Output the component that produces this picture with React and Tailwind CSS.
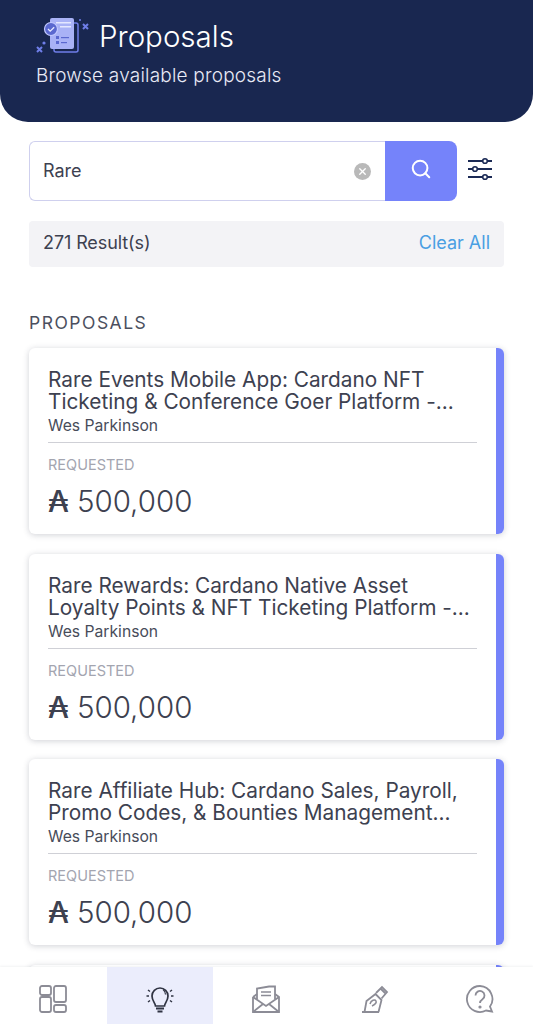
import { Search, X } from "lucide-react";

const proposals = [
  { id: 1, title: "Rare Events Mobile App: Cardano NFT Ticketing & Conference Goer Platform -..." },
  { id: 2, title: "Rare Rewards: Cardano Native Asset Loyalty Points & NFT Ticketing Platform -..." },
  { id: 3, title: "Rare Affiliate Hub: Cardano Sales, Payroll, Promo Codes, & Bounties Management..." },
];

const HeaderIcon = () => (
  <svg width="54" height="40" viewBox="0 0 54 40" fill="none">
    <rect x="18" y="7" width="24" height="29" rx="2" stroke="#6f7ee8" strokeWidth="1.5" />
    <rect x="14" y="2" width="24" height="31" rx="2" fill="#a9b2f6" />
    <rect x="20" y="6" width="15" height="1.5" fill="#e4e7ff" />
    <rect x="24" y="10" width="11" height="1.5" fill="#e4e7ff" />
    <circle cx="15" cy="13" r="6.5" fill="#5a68cf" stroke="#c3caff" strokeWidth="1.2" />
    <path d="M12 13l2.2 2.2 4-4" stroke="#e8eaff" strokeWidth="1.3" />
    <rect x="20" y="20" width="3" height="3" fill="#5a68cf" />
    <rect x="25" y="21" width="8" height="1.2" fill="#5a68cf" />
    <rect x="20" y="25" width="3" height="3" fill="#5a68cf" />
    <rect x="25" y="26" width="6" height="1.2" fill="#5a68cf" />
    <path d="M47 8l5 5m0-5l-5 5M1 31l5 5m0-5l-5 5" stroke="#6f7ee8" strokeWidth="2" />
    <circle cx="44" cy="4" r="1" fill="#6f7ee8" />
    <circle cx="8" cy="27" r="1.6" fill="#6f7ee8" />
  </svg>
);

const FilterIcon = () => (
  <svg width="26" height="24" viewBox="0 0 26 24" fill="none" stroke="#1b2a55" strokeWidth="2.2">
    <path d="M1 4h24M1 12h24M1 20h24" />
    <circle cx="18" cy="4" r="2.3" fill="#fff" strokeWidth="1.6" />
    <circle cx="8" cy="12" r="2.3" fill="#fff" strokeWidth="1.6" />
    <circle cx="18" cy="20" r="2.3" fill="#fff" strokeWidth="1.6" />
  </svg>
);

const GridIcon = () => (
  <svg width="28" height="28" viewBox="0 0 28 28" fill="none" stroke="#8c8c96" strokeWidth="1.8">
    <rect x="1" y="1" width="11" height="9" rx="2" />
    <rect x="1" y="12" width="11" height="15" rx="2" />
    <rect x="15" y="1" width="12" height="16" rx="2" />
    <rect x="15" y="20" width="12" height="7" rx="2" />
  </svg>
);

const BulbIcon = () => (
  <svg width="30" height="30" viewBox="0 0 30 30" fill="none" stroke="#2f3342" strokeWidth="1.7">
    <path d="M10.5 22c0-3-3.5-5-3.5-10a8 8 0 0 1 16 0c0 5-3.500 7-3.500 10z" />
    <path d="M18 5.500a6 6 0 0 1 2.500 5" strokeWidth="1.2" />
    <path d="M11 24.500h8M12.500 27.500h5" strokeWidth="2" />
    <path d="M3 6l2 1.500M1.500 12h2.500M3 18l2-1.500M27 6l-2 1.500M28.500 12H26M27 18l-2-1.500" strokeWidth="1.500" />
  </svg>
);

const MailIcon = () => (
  <svg width="30" height="28" viewBox="0 0 30 28" fill="none" stroke="#8c8c96" strokeWidth="1.8">
    <path d="M2 12v15h26V12l-4-3M2 12l4-3" />
    <path d="M6 14V3.500l12-2h6V14" />
    <path d="M10 7h10M10 10.500h10" strokeWidth="1.500" />
    <path d="M2 12l13 9 13-9M2 27l10-8M28 27l-10-8" />
  </svg>
);

const PenIcon = () => (
  <svg width="30" height="30" viewBox="0 0 30 30" fill="none" stroke="#8c8c96" strokeWidth="1.800">
    <path d="M1 28h17M3.500 28l2-11 9-7 6 6-3 12" />
    <path d="M15 9l6-6 5 5-5.500 6.500M20 5l4 4" />
    <path d="M9 20c1-4 5-5 6-3s-2 4-4 5" strokeWidth="1.500" />
  </svg>
);

const HelpIcon = () => (
  <svg width="30" height="30" viewBox="0 0 30 30" fill="none" stroke="#8c8c96" strokeWidth="1.800">
    <path d="M15 2a13 13 0 1 0 6 24.500l6 1-2-5A13 13 0 0 0 15 2z" />
    <path d="M10.500 11.500a4.500 4.500 0 1 1 7 3.700c-1.500 1-2.500 1.800-2.500 3.800" />
    <circle cx="15" cy="23" r="0.700" />
  </svg>
);

const ProposalCard = ({ title }) => (
  <div className="flex h-[186px] shrink-0 overflow-hidden rounded-[6px] bg-white shadow-[0_1px_6px_rgba(40,45,70,0.22)]">
    <div className="min-w-0 flex-1 px-[19px] pt-[21px]">
      <h3 className="text-[20.800px] leading-[22px] text-[#3d4150]">{title}</h3>
      <p className="mt-[3px] text-[15.700px] leading-[20px] text-[#484c5a]">Wes Parkinson</p>
      <div className="mt-[6px] border-t border-[#cfd0d6]" />
      <p className="mt-[14px] text-[14.500px] leading-[16px] text-[#a3a5b0]">REQUESTED</p>
      <p className="mt-[8px] flex items-baseline gap-[8px] text-[29.500px] font-light leading-[40px] text-[#3d4150]">
        <span className="font-medium">₳</span>
        <span>500,000</span>
      </p>
    </div>
    <div className="w-[8px] shrink-0 bg-[#7583fa]" />
  </div>
);

export default function App() {
  return (
    <div className="flex h-[1024px] flex-col overflow-hidden bg-white font-['Inter','Noto_Sans',sans-serif]">
      <header className="h-[122px] shrink-0 rounded-b-[28px] bg-[#192750] px-[36px] pt-[16px] text-white">
        <div className="flex items-center gap-[9px]">
          <HeaderIcon />
          <span className="-mt-[1px] text-[29.500px] font-light leading-[40px]">Proposals</span>
        </div>
        <p className="mt-[8px] text-[19px] font-light leading-[24px] tracking-[0.2px] text-[#e8eaf6]">
          Browse available proposals
        </p>
      </header>

      <div className="flex min-h-0 flex-1 flex-col overflow-hidden px-[29px] pt-[19px]">
        <div className="flex shrink-0 items-center">
          <div className="flex h-[60px] w-[356px] items-center justify-between rounded-l-[6px] border border-r-0 border-[#cfd0ee] pl-[13px] pr-[14px]">
            <span className="-mt-[2px] text-[18px] text-[#3d4150]">Rare</span>
            <span className="flex h-[17px] w-[17px] items-center justify-center rounded-full bg-[#b9b9b9]">
              <X size={11} color="#fff" strokeWidth={3} />
            </span>
          </div>
          <button className="flex h-[60px] w-[72px] items-center justify-center rounded-r-[8px] bg-[#7583fa]">
            <Search size={22} color="#fff" strokeWidth={2.2} className="-mt-[5px]" />
          </button>
          <span className="-mt-[4px] ml-[10px] flex"><FilterIcon /></span>
        </div>

        <div className="mt-[20px] flex h-[46px] shrink-0 items-center justify-between rounded-[4px] bg-[#f3f3f6] px-[14px] pb-[4px]">
          <span className="text-[18px] tracking-[-0.1px] text-[#3d4150]">271 Result(s)</span>
          <span className="text-[18px] text-[#4a9fe3]">Clear All</span>
        </div>

        <h2 className="mt-[46px] shrink-0 text-[17.500px] leading-[20px] tracking-[1.500px] text-[#4b4f5e]">PROPOSALS</h2>

        <div className="mt-[15px] flex flex-col gap-[19.700px]">
          {proposals.map((p) => (
            <ProposalCard key={p.id} title={p.title} />
          ))}
          <div className="flex h-[186px] shrink-0 justify-end overflow-hidden rounded-[6px] bg-white shadow-[0_1px_6px_rgba(40,45,70,0.22)]">
            <div className="w-[8px] bg-[#7583fa]" />
          </div>
        </div>
      </div>

      <nav className="grid h-[57px] shrink-0 grid-cols-5 bg-white shadow-[0_-1px_2px_rgba(40,45,70,0.06)]">
        <div className="flex items-center justify-center pt-[7px]"><GridIcon /></div>
        <div className="flex items-center justify-center bg-[#ebedfc] pt-[7px]"><BulbIcon /></div>
        <div className="flex items-center justify-center pt-[7px]"><MailIcon /></div>
        <div className="flex items-center justify-center pl-[6px] pt-[7px]"><PenIcon /></div>
        <div className="flex items-center justify-center pt-[7px]"><HelpIcon /></div>
      </nav>
    </div>
  );
}
